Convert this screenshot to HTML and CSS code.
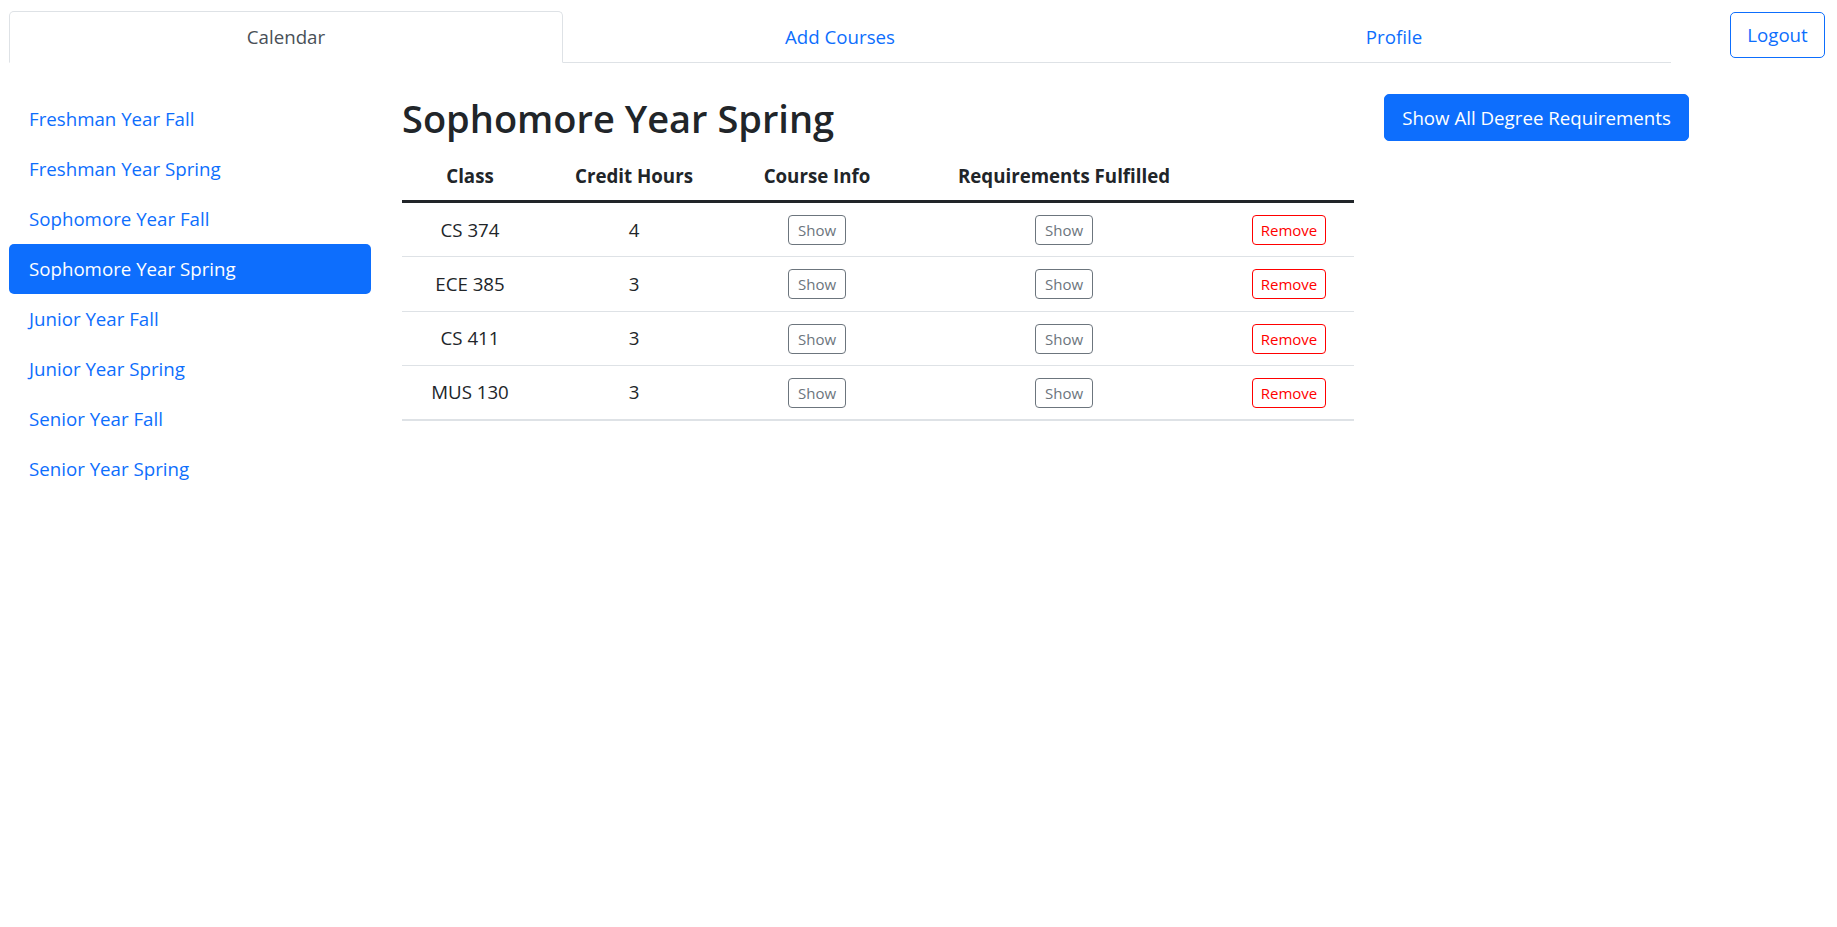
FILE: index.html
```html
<!DOCTYPE html>
<html lang="en">
<head>
<meta charset="utf-8">
<title>Calendar</title>
<link rel="stylesheet" href="styles.css">
</head>
<body>
<header class="topbar">
  <nav class="tabs">
    <a class="tab active" href="#">Calendar</a>
    <a class="tab" href="#">Add Courses</a>
    <a class="tab" href="#">Profile</a>
  </nav>
  <button class="btn btn-outline-primary logout">Logout</button>
</header>
<div class="content">
  <nav class="pills">
    <a class="pill" href="#">Freshman Year Fall</a>
    <a class="pill" href="#">Freshman Year Spring</a>
    <a class="pill" href="#">Sophomore Year Fall</a>
    <a class="pill active" href="#">Sophomore Year Spring</a>
    <a class="pill" href="#">Junior Year Fall</a>
    <a class="pill" href="#">Junior Year Spring</a>
    <a class="pill" href="#">Senior Year Fall</a>
    <a class="pill" href="#">Senior Year Spring</a>
  </nav>
  <main class="main">
    <h2 class="title">Sophomore Year Spring</h2>
    <table class="courses">
      <colgroup>
        <col class="c1"><col class="c2"><col class="c3"><col class="c4"><col class="c5">
      </colgroup>
      <thead>
        <tr><th>Class</th><th>Credit Hours</th><th>Course Info</th><th>Requirements Fulfilled</th><th></th></tr>
      </thead>
      <tbody>
        <tr><td>CS 374</td><td>4</td><td><button class="sm show">Show</button></td><td><button class="sm show">Show</button></td><td><button class="sm remove">Remove</button></td></tr>
        <tr><td>ECE 385</td><td>3</td><td><button class="sm show">Show</button></td><td><button class="sm show">Show</button></td><td><button class="sm remove">Remove</button></td></tr>
        <tr><td>CS 411</td><td>3</td><td><button class="sm show">Show</button></td><td><button class="sm show">Show</button></td><td><button class="sm remove">Remove</button></td></tr>
        <tr><td>MUS 130</td><td>3</td><td><button class="sm show">Show</button></td><td><button class="sm show">Show</button></td><td><button class="sm remove">Remove</button></td></tr>
      </tbody>
    </table>
  </main>
  <div class="side-actions">
    <button class="btn btn-primary degree">Show All Degree Requirements</button>
  </div>
</div>
</body>
</html>
```

FILE: styles.css
```css
* { box-sizing: border-box; }
html, body { margin: 0; padding: 0; background: #fff; }
body {
  font-family: "Open Sans", "Noto Sans", sans-serif;
  font-size: 18.7px;
  line-height: 30px;
  color: #212529;
}
a { text-decoration: none; }

.topbar {
  display: flex;
  align-items: flex-start;
  padding: 11px 12px 0 9px;
}
.tabs {
  display: flex;
  width: 1662px;
  border-bottom: 1px solid #dee2e6;
}
.tab {
  flex: 1 1 0;
  text-align: center;
  padding: 10px 20px;
  color: #0d6efd;
  border: 1px solid transparent;
  border-radius: 5px 5px 0 0;
  margin-bottom: -1px;
}
.tab.active {
  color: #495057;
  border-color: #dee2e6 #dee2e6 #fff;
  background: #fff;
}

.btn {
  font-family: inherit;
  font-size: 18.7px;
  line-height: 30px;
  padding: 7.5px 15px;
  border-radius: 5px;
  border: 1px solid #0d6efd;
  cursor: pointer;
}
.btn-outline-primary { color: #0d6efd; background: #fff; }
.btn-primary { color: #fff; background: #0d6efd; }
.logout { margin-left: auto; margin-top: 1px; width: 95px; padding: 7px 0; }

.content {
  display: flex;
  align-items: flex-start;
  padding: 31px 0 0 9px;
}
.pills {
  width: 362px;
  display: flex;
  flex-direction: column;
}
.pill {
  display: block;
  padding: 10px 20px;
  color: #0d6efd;
  border-radius: 5px;
}
.pill.active { background: #0d6efd; color: #fff; }

.main {
  width: 952px;
  margin-left: 31px;
}
.title {
  margin: 0 0 9px;
  font-size: 38px;
  line-height: 48px;
  font-weight: 600;
  color: #212529;
}
.courses {
  width: 100%;
  border-collapse: separate;
  border-spacing: 0;
  table-layout: fixed;
}
.c1 { width: 136px; }
.c2 { width: 192px; }
.c3 { width: 174px; }
.c4 { width: 320px; }
.c5 { width: 130px; }
.courses th {
  padding: 10px 6px 9px;
  font-weight: 700;
  text-align: center;
  border-bottom: 3px solid #212529;
}
.courses td {
  height: 54.25px;
  padding: 0 6px;
  line-height: 30px;
  text-align: center;
  vertical-align: middle;
  border-bottom: 1px solid #dee2e6;
}
.courses tbody tr:last-child td { border-bottom-width: 2px; height: 55.25px; }

.sm {
  display: inline-block;
  vertical-align: top;
  height: 30px;
  margin-top: 1px;
  font-family: inherit;
  font-size: 15px;
  line-height: 22px;
  padding: 3px 0;
  border-radius: 4px;
  background: #fff;
  cursor: pointer;
}
.show { width: 58px; color: #6c757d; border: 1px solid #6c757d; }
.remove { width: 74px; color: #ff0000; border: 1px solid #ff0000; }

.side-actions { margin-left: 30px; }
.degree { width: 305px; padding: 7.5px 0; text-align: center; }
```
